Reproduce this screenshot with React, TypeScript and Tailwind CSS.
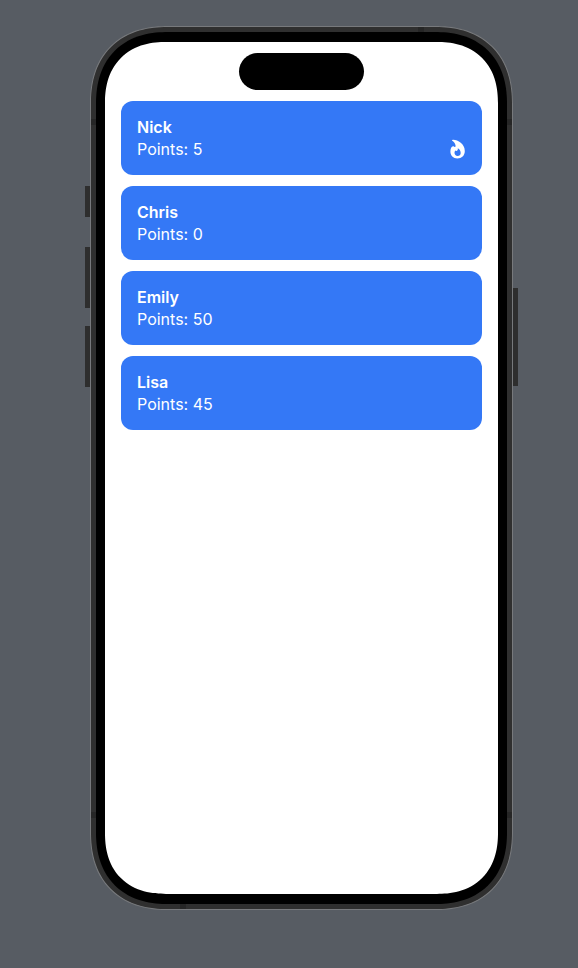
const players = [
  { name: 'Nick', points: 5, streak: true },
  { name: 'Chris', points: 0, streak: false },
  { name: 'Emily', points: 50, streak: false },
  { name: 'Lisa', points: 45, streak: false },
];

function Flame() {
  return (
    <svg viewBox="0 0 16 20" className="h-5 w-4 fill-white" role="img" aria-label="On fire">
      <path
        fillRule="evenodd"
        d="M2.3 0.9C7 0.3 14.8 4.6 14.8 11.9C14.8 16.5 11.6 19.4 7.4 19.4C3.2 19.4 0.4 16.5 0.4 12.5C0.4 9.8 1.5 7.3 3 7.3C3.8 7.3 4.1 8 4.7 8C5.5 8 5.7 7.2 5.5 6.2C5.1 4.2 3.6 2.6 2.3 1.8C1.9 1.5 1.9 1 2.3 0.9ZM7.8 9.2C8.1 11 7.2 11.9 6.4 11.9C6 11.9 5.7 11.7 5.4 11.4C4.8 12 4.5 12.9 4.5 13.8C4.5 15.8 5.8 17 7.6 17C9.4 17 10.7 15.7 10.7 13.9C10.7 11.7 9.4 9.9 7.8 9.2Z"
      />
    </svg>
  );
}

function PlayerCard({ name, points, streak }: { name: string; points: number; streak: boolean }) {
  return (
    <li className="flex items-end justify-between rounded-xl bg-[#3478f6] p-4 text-white">
      <div className="flex flex-col gap-[2px] text-base leading-5">
        <h2 className="font-semibold">{name}</h2>
        <p>Points: {points}</p>
      </div>
      {streak && <Flame />}
    </li>
  );
}

function AntennaBands() {
  return (
    <>
      <div className="absolute inset-0 flex flex-col justify-between pt-[92px] pb-[91px]">
        <div className="h-[6px] bg-[#262626]" />
        <div className="h-[6px] bg-[#262626]" />
      </div>
      <div className="absolute inset-0 flex justify-between pr-[88px] pl-[89px]">
        <div className="h-[5px] w-[6px] self-end bg-[#262626]" />
        <div className="h-[5px] w-[6px] bg-[#262626]" />
      </div>
    </>
  );
}

export default function App() {
  return (
    <main className="flex min-h-screen justify-center bg-[#575c63] pt-[26px] pb-[58px] pl-[25px] font-['Inter','Liberation_Sans',sans-serif]">
      <div className="flex w-[5px] shrink-0 flex-col pt-40">
        <div className="h-[31px] bg-[#2e2e2e]" />
        <div className="mt-[30px] h-[61px] bg-[#2e2e2e]" />
        <div className="mt-[18px] h-[61px] bg-[#2e2e2e]" />
      </div>
      <div className="relative flex w-full max-w-[423px] flex-col rounded-[78px] border border-[#77797c] bg-[#2f2f2f] p-[5px] [corner-shape:superellipse(1.2)]">
        <AntennaBands />
        <div className="relative flex grow flex-col rounded-[72px] bg-black px-[9px] py-[10px] [corner-shape:superellipse(1.2)]">
          <div className="flex grow flex-col rounded-[61px] bg-white px-4 pt-[11px] [corner-shape:superellipse(1.2)]">
            <div className="h-[37px] w-[125px] self-center rounded-full bg-black" />
            <ul className="mt-[11px] flex flex-col gap-[11px]">
              {players.map((player) => (
                <PlayerCard key={player.name} {...player} />
              ))}
            </ul>
          </div>
        </div>
      </div>
      <div className="w-[5px] shrink-0 pt-[262px]">
        <div className="h-[98px] bg-[#2e2e2e]" />
      </div>
    </main>
  );
}
